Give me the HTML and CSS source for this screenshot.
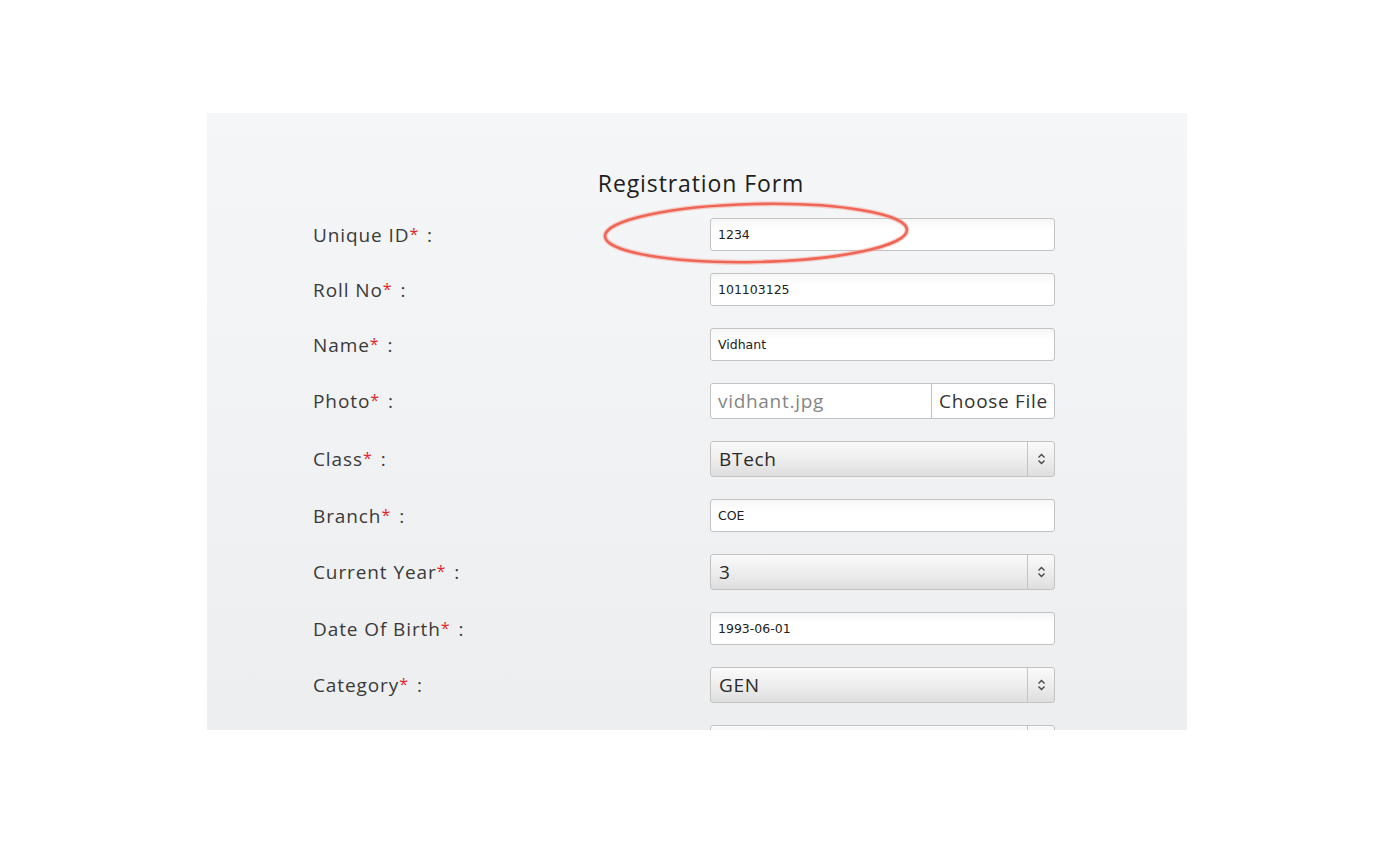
FILE: index.html
```html
<!DOCTYPE html>
<html lang="en">
<head>
<meta charset="utf-8">
<title>Registration Form</title>
<link rel="stylesheet" href="styles.css">
</head>
<body>
<div class="panel">
  <h1 class="title">Registration Form</h1>
  <form class="form">
    <div class="row">
      <label class="label">Unique ID<span class="req">*</span>:</label>
      <div class="input text">1234</div>
    </div>
    <div class="row">
      <label class="label">Roll No<span class="req">*</span>:</label>
      <div class="input text">101103125</div>
    </div>
    <div class="row">
      <label class="label">Name<span class="req">*</span>:</label>
      <div class="input text">Vidhant</div>
    </div>
    <div class="row">
      <label class="label">Photo<span class="req">*</span>:</label>
      <div class="input file"><span class="file-name">vidhant.jpg</span><span class="file-btn">Choose File</span></div>
    </div>
    <div class="row">
      <label class="label">Class<span class="req">*</span>:</label>
      <div class="input select"><span class="sel-val">BTech</span><span class="sel-arrow"><svg width="9" height="12" viewBox="0 0 9 12"><path d="M1.5 4.5 L4.5 1.5 L7.5 4.5 M1.5 7.5 L4.5 10.5 L7.5 7.5" fill="none" stroke="#444" stroke-width="1.3"/></svg></span></div>
    </div>
    <div class="row">
      <label class="label">Branch<span class="req">*</span>:</label>
      <div class="input text">COE</div>
    </div>
    <div class="row">
      <label class="label">Current Year<span class="req">*</span>:</label>
      <div class="input select"><span class="sel-val">3</span><span class="sel-arrow"><svg width="9" height="12" viewBox="0 0 9 12"><path d="M1.5 4.5 L4.5 1.5 L7.5 4.5 M1.5 7.5 L4.5 10.5 L7.5 7.5" fill="none" stroke="#444" stroke-width="1.3"/></svg></span></div>
    </div>
    <div class="row">
      <label class="label">Date Of Birth<span class="req">*</span>:</label>
      <div class="input text">1993-06-01</div>
    </div>
    <div class="row">
      <label class="label">Category<span class="req">*</span>:</label>
      <div class="input select"><span class="sel-val">GEN</span><span class="sel-arrow"><svg width="9" height="12" viewBox="0 0 9 12"><path d="M1.5 4.5 L4.5 1.5 L7.5 4.5 M1.5 7.5 L4.5 10.5 L7.5 7.5" fill="none" stroke="#444" stroke-width="1.3"/></svg></span></div>
    </div>
    <div class="row">
      <label class="label"></label>
      <div class="input select"><span class="sel-val"></span><span class="sel-arrow"></span></div>
    </div>
  </form>
  <svg class="annot" width="980" height="617" viewBox="0 0 980 617">
    <ellipse cx="549" cy="120" rx="151" ry="29" transform="rotate(-1.2 549 120)" fill="none" stroke="#f3a49a" stroke-width="5" opacity="0.5"/>
    <ellipse cx="549" cy="120" rx="151" ry="29" transform="rotate(-1.2 549 120)" fill="none" stroke="#f06656" stroke-width="2.6"/>
  </svg>
</div>
</body>
</html>
```
FILE: styles.css
```css
html, body {
  margin: 0;
  padding: 0;
  background: #ffffff;
}
body {
  width: 1394px;
  height: 843px;
  font-family: "Open Sans", "Liberation Sans", sans-serif;
  color: #333;
}
.panel {
  position: relative;
  margin: 113px 0 0 207px;
  width: 980px;
  height: 617px;
  overflow: hidden;
  background: linear-gradient(to bottom, #f5f6f8 0%, #eceef0 100%);
}
.title {
  margin: 0;
  padding-top: 56px;
  height: 49px;
  text-align: center;
  font-size: 23px;
  font-weight: normal;
  color: #1e1e1e;
  letter-spacing: 0.9px;
  line-height: 28px;
  padding-left: 8px;
}
.form {
  display: flex;
  flex-direction: column;
  gap: 22px;
  padding-left: 106px;
}
.row {
  display: flex;
  align-items: center;
}
.label {
  width: 397px;
  font-size: 19px;
  color: #3a3a3a;
  letter-spacing: 0.9px;
}
.req {
  color: #e0262a;
  font-size: 16px;
  position: relative;
  top: -2px;
  margin-right: 8px;
}
.input {
  box-sizing: border-box;
  width: 345px;
  border: 1px solid #c3c3c3;
  border-radius: 3px;
  display: flex;
  align-items: center;
}
.text {
  height: 33px;
  padding-left: 7px;
  background: linear-gradient(to bottom, #f6f6f6 0%, #ffffff 35%, #ffffff 100%);
  font-family: "DejaVu Sans", sans-serif;
  font-size: 12.5px;
  color: #222;
}
.file {
  height: 36px;
  background: #fff;
  font-size: 19px;
  letter-spacing: 0.7px;
}
.file-name {
  flex: 1;
  padding-left: 7px;
  color: #858585;
}
.file-btn {
  align-self: stretch;
  display: flex;
  align-items: center;
  padding: 0 6px 0 7px;
  border-left: 1px solid #c3c3c3;
  color: #333;
}
.select {
  height: 36px;
  background: linear-gradient(to bottom, #fafafa 0%, #ececec 55%, #dedede 100%);
  font-size: 19px;
  letter-spacing: 0.7px;
  color: #2a2a2a;
}
.sel-val {
  flex: 1;
  padding-left: 8px;
}
.sel-arrow {
  align-self: stretch;
  width: 26px;
  border-left: 1px solid #c3c3c3;
  display: flex;
  align-items: center;
  justify-content: center;
}
.annot {
  position: absolute;
  left: 0;
  top: 0;
  pointer-events: none;
}
```
